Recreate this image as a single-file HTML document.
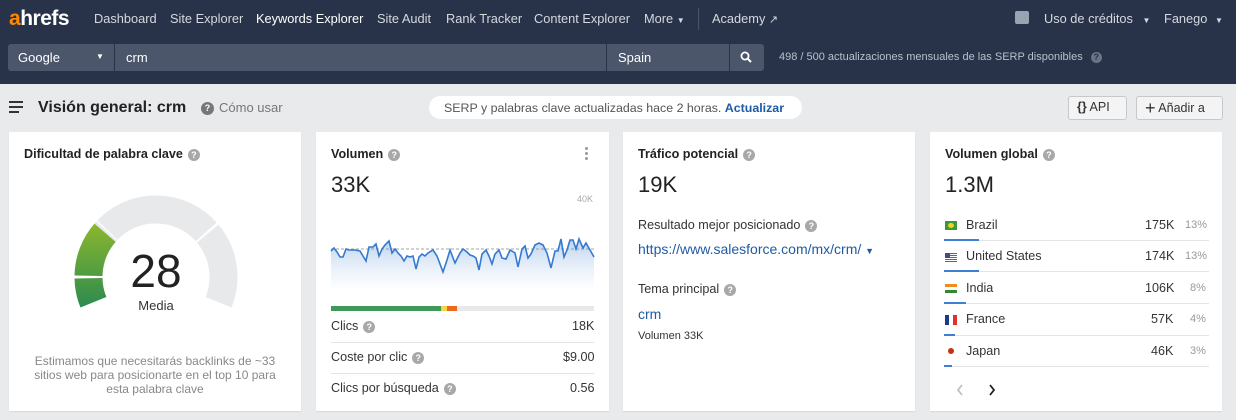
<!DOCTYPE html>
<html><head><meta charset="utf-8"><style>
*{margin:0;padding:0;box-sizing:border-box}
body{width:1236px;height:420px;background:#e9eaec;font-family:"Liberation Sans",sans-serif;position:relative;overflow:hidden;color:#222}
.a{position:absolute;white-space:nowrap}
.top{position:absolute;left:0;top:0;width:1236px;height:84px;background:#283349}
.nav{color:#d5d9e0;font-size:12.8px;top:11px}
.q{display:inline-block;width:12px;height:12px;border-radius:50%;background:#a8a8a8;color:#fff;font-size:9px;line-height:12px;text-align:center;font-weight:bold;vertical-align:middle;margin-left:5px}
.card{position:absolute;top:132px;height:279px;background:#fff;box-shadow:0 1px 1px rgba(0,0,0,.08)}
.h{font-size:12.6px;font-weight:bold;color:#222}
.big{font-size:22px;color:#222}
.row{font-size:12.6px;color:#333}
.ln{position:absolute;height:1px;background:#e3e4e6}
.bl{position:absolute;height:2px;background:#3f7fd6}
</style></head><body>
<div class="top"></div>
<div class="a" style="left:9px;top:7px;font-size:21px;font-weight:bold;color:#fff;letter-spacing:-0.5px"><span style="color:#ff8800">a</span>hrefs</div>
<div class="a nav" style="left:94px">Dashboard</div>
<div class="a nav" style="left:170px">Site Explorer</div>
<div class="a nav" style="left:256px;color:#fff">Keywords Explorer</div>
<div class="a nav" style="left:377px">Site Audit</div>
<div class="a nav" style="left:446px">Rank Tracker</div>
<div class="a nav" style="left:534px">Content Explorer</div>
<div class="a nav" style="left:644px">More <span style="font-size:8px">▼</span></div>
<div class="a" style="left:698px;top:8px;width:1px;height:22px;background:#4a5468"></div>
<div class="a nav" style="left:712px">Academy <span style="font-size:11px">↗</span></div>
<div class="a" style="left:1015px;top:11px;width:14px;height:13px;background:#9aa3b2;border-radius:2px"></div>
<div class="a nav" style="left:1044px">Uso de créditos <span style="font-size:8px;margin-left:6px">▼</span></div>
<div class="a nav" style="left:1164px">Fanego <span style="font-size:8px;margin-left:4px">▼</span></div>

<div class="a" style="left:8px;top:44px;width:106px;height:27px;background:#4b566b;border-radius:3px 0 0 3px"></div>
<div class="a" style="left:18px;top:50px;color:#fff;font-size:13px">Google</div>
<div class="a" style="left:96px;top:52px;color:#fff;font-size:8px">▼</div>
<div class="a" style="left:115px;top:44px;width:491px;height:27px;background:#4b566b"></div>
<div class="a" style="left:126px;top:50px;color:#fff;font-size:13px">crm</div>
<div class="a" style="left:607px;top:44px;width:122px;height:27px;background:#4b566b"></div>
<div class="a" style="left:618px;top:50px;color:#fff;font-size:13px">Spain</div>
<div class="a" style="left:739px;top:52px;color:#fff;font-size:8px">▼</div>
<div class="a" style="left:730px;top:44px;width:34px;height:27px;background:#4b566b;border-radius:0 3px 3px 0"></div>
<svg class="a" style="left:740px;top:51px" width="13" height="13"><circle cx="5" cy="5" r="3.6" stroke="#fff" stroke-width="1.8" fill="none"/><path d="M8 8l3 3" stroke="#fff" stroke-width="2"/></svg>
<div class="a" style="left:779px;top:51px;color:#b9c0cc;font-size:11px">498 / 500 actualizaciones mensuales de las SERP disponibles <span class="q" style="background:#6b7487;color:#283349;width:11px;height:11px;line-height:11px">?</span></div>

<div class="a" style="left:9px;top:101px;width:14px;height:2px;background:#333;box-shadow:0 5px 0 #333"></div>
<div class="a" style="left:9px;top:111px;width:10px;height:2px;background:#333"></div>
<div class="a" style="left:38px;top:99px;font-size:16px;font-weight:bold;color:#222">Visión general: crm</div>
<div class="a" style="left:199px;top:100px;font-size:13px;color:#777"><span class="q" style="background:#777;width:13px;height:13px;margin:0 5px 0 2px">?</span>Cómo usar</div>
<div class="a" style="left:429px;top:96px;width:373px;height:23px;background:#fff;border-radius:12px"></div>
<div class="a" style="left:444px;top:101px;font-size:12.4px;color:#555">SERP y palabras clave actualizadas hace 2 horas. <b style="color:#1f5aa6">Actualizar</b></div>
<div class="a" style="left:1068px;top:96px;width:59px;height:24px;border:1px solid #c7c8cb;border-radius:3px;background:#f4f4f5"></div>
<div class="a" style="left:1077px;top:100px;font-size:12.5px;color:#333"><b>{}</b> API</div>
<div class="a" style="left:1136px;top:96px;width:87px;height:24px;border:1px solid #c7c8cb;border-radius:3px;background:#f4f4f5"></div>
<div class="a" style="left:1145px;top:98px;font-size:12.5px;color:#333"><span style="font-size:18px;vertical-align:-2px">+</span> Añadir a</div>

<div class="card" style="left:9px;width:292px"></div>
<div class="card" style="left:316px;width:293px"></div>
<div class="card" style="left:623px;width:292px"></div>
<div class="card" style="left:930px;width:292px"></div>

<!-- card1 -->
<div class="a h" style="left:24px;top:147px">Dificultad de palabra clave<span class="q">?</span></div>
<svg class="a" style="left:0;top:0" width="310" height="420">
<defs><linearGradient id="g" gradientUnits="userSpaceOnUse" x1="0" y1="228" x2="0" y2="308"><stop offset="0" stop-color="#86b52f"/><stop offset="1" stop-color="#2b8a50"/></linearGradient></defs>
<g fill="none" stroke-width="28">
<path d="M93.4 302.3A67.5 67.5 0 0 1 88.5 278.2" stroke="url(#g)"/>
<path d="M88.5 275.8A67.5 67.5 0 0 1 105.1 232.7" stroke="url(#g)"/>
<path d="M105.1 232.7A67.5 67.5 0 0 1 106.6 231" stroke="#e8e9eb"/>
<path d="M107.4 230.1A67.5 67.5 0 0 1 206.2 231.8" stroke="#e8e9eb"/>
<path d="M207.7 233.6A67.5 67.5 0 0 1 218.6 302.3" stroke="#e8e9eb"/>
</g></svg>
<div class="a" style="left:156px;top:244px;transform:translateX(-50%);font-size:46px;color:#222">28</div>
<div class="a" style="left:156px;top:298px;transform:translateX(-50%);font-size:13px;color:#333">Media</div>
<div class="a" style="left:155px;top:354px;transform:translateX(-50%);font-size:12px;color:#888;text-align:center;line-height:14px">Estimamos que necesitarás backlinks de ~33<br>sitios web para posicionarte en el top 10 para<br>esta palabra clave</div>

<!-- card2 -->
<div class="a h" style="left:331px;top:147px">Volumen<span class="q">?</span></div>
<div class="a" style="left:585px;top:147px;width:3px;height:3px;background:#999;border-radius:50%;box-shadow:0 5px 0 #999,0 10px 0 #999"></div>
<div class="a big" style="left:331px;top:172px">33K</div>
<div class="a" style="left:577px;top:194px;font-size:9px;color:#aaa">40K</div>
<svg class="a" style="left:0;top:0" width="620" height="420">
<defs><linearGradient id="f" x1="0" y1="0" x2="0" y2="1"><stop offset="0" stop-color="#bcd3ef"/><stop offset="1" stop-color="#fff" stop-opacity=".6"/></linearGradient></defs>
<path d="M331 251L334 248L337 252L340 257L343 257L346 249L349 250L355 250L360 251L366 261L369 247L373 247L376 244L379 256L382 249L385 245L389 241L392 253L395 249L398 253L401 256L404 261L407 256L410 257L413 256L416 269L419 257L422 254L425 256L428 253L433 250L437 256L443 272L447 260L450 250L455 263L460 253L463 249L467 252L470 255L473 256L476 258L479 270L482 254L486 250L489 256L492 264L495 254L499 250L502 258L506 259L510 250L515 253L518 267L522 249L525 246L528 258L531 254L535 245L539 243L543 245L547 253L551 268L555 251L558 251L561 239L564 257L567 250L570 240L573 240L576 249L579 239L583 248L586 243L594 257L594 291L331 291Z" fill="url(#f)"/>
<line x1="331" y1="249" x2="594" y2="249" stroke="#888" stroke-dasharray="3 2" stroke-width="0.8"/>
<path d="M331 251L334 248L337 252L340 257L343 257L346 249L349 250L355 250L360 251L366 261L369 247L373 247L376 244L379 256L382 249L385 245L389 241L392 253L395 249L398 253L401 256L404 261L407 256L410 257L413 256L416 269L419 257L422 254L425 256L428 253L433 250L437 256L443 272L447 260L450 250L455 263L460 253L463 249L467 252L470 255L473 256L476 258L479 270L482 254L486 250L489 256L492 264L495 254L499 250L502 258L506 259L510 250L515 253L518 267L522 249L525 246L528 258L531 254L535 245L539 243L543 245L547 253L551 268L555 251L558 251L561 239L564 257L567 250L570 240L573 240L576 249L579 239L583 248L586 243L594 257" fill="none" stroke="#3579d0" stroke-width="1.6"/>
<rect x="331" y="306" width="263" height="5" fill="#e8e9eb"/>
<rect x="331" y="306" width="110" height="5" fill="#3f9a5a"/>
<rect x="441" y="306" width="6" height="5" fill="#f5d34a"/>
<rect x="447" y="306" width="10" height="5" fill="#ec6a1f"/>
</svg>
<div class="a row" style="left:331px;top:319px">Clics<span class="q">?</span></div>
<div class="a row" style="left:572px;top:319px">18K</div>
<div class="ln" style="left:331px;top:342px;width:263px"></div>
<div class="a row" style="left:331px;top:350px">Coste por clic<span class="q">?</span></div>
<div class="a row" style="left:563px;top:350px">$9.00</div>
<div class="ln" style="left:331px;top:373px;width:263px"></div>
<div class="a row" style="left:331px;top:381px">Clics por búsqueda<span class="q">?</span></div>
<div class="a row" style="left:570px;top:381px">0.56</div>

<!-- card3 -->
<div class="a h" style="left:638px;top:147px">Tráfico potencial<span class="q">?</span></div>
<div class="a big" style="left:638px;top:172px">19K</div>
<div class="a row" style="left:638px;top:218px">Resultado mejor posicionado<span class="q">?</span></div>
<div class="a" style="left:638px;top:241px;font-size:14px;color:#1f5aa6">https://www.salesforce.com/mx/crm/ <span style="font-size:9px">▼</span></div>
<div class="a row" style="left:638px;top:282px">Tema principal<span class="q">?</span></div>
<div class="a" style="left:638px;top:306px;font-size:14px;color:#1f5aa6">crm</div>
<div class="a" style="left:638px;top:330px;font-size:11px;color:#333">Volumen 33K</div>

<!-- card4 -->
<div class="a h" style="left:945px;top:147px">Volumen global<span class="q">?</span></div>
<div class="a big" style="left:945px;top:172px">1.3M</div>
<div class="a" style="left:945px;top:221px;width:12px;height:9px;background:#3a9a3a"><div style="margin:2px 3px;width:6px;height:5px;background:#f2d21f;border-radius:50%"></div></div>
<div class="a" style="left:945px;top:253px;width:12px;height:9px;background:repeating-linear-gradient(#d34 0 1px,#fff 1px 2px)"><div style="width:5px;height:5px;background:#3c4f8a"></div></div>
<div class="a" style="left:945px;top:284px;width:12px;height:9px;background:linear-gradient(#f28b20 0 3px,#fff 3px 6px,#2d8a2d 6px)"></div>
<div class="a" style="left:945px;top:315px;width:12px;height:10px;background:linear-gradient(90deg,#1c3a8a 0 4px,#fff 4px 8px,#e03030 8px)"></div>
<div class="a" style="left:948px;top:348px;width:6px;height:6px;background:#c83010;border-radius:50%"></div>
<div class="a row" style="left:966px;top:218px">Brazil</div><div class="a row" style="left:1145px;top:218px">175K</div><div class="a" style="left:1185px;top:219px;font-size:11px;color:#999">13%</div>
<div class="ln" style="left:944px;top:240px;width:265px"></div><div class="bl" style="left:944px;top:239px;width:35px"></div>
<div class="a row" style="left:966px;top:249px">United States</div><div class="a row" style="left:1145px;top:249px">174K</div><div class="a" style="left:1185px;top:250px;font-size:11px;color:#999">13%</div>
<div class="ln" style="left:944px;top:271px;width:265px"></div><div class="bl" style="left:944px;top:270px;width:35px"></div>
<div class="a row" style="left:966px;top:281px">India</div><div class="a row" style="left:1145px;top:281px">106K</div><div class="a" style="left:1190px;top:282px;font-size:11px;color:#999">8%</div>
<div class="ln" style="left:944px;top:303px;width:265px"></div><div class="bl" style="left:944px;top:302px;width:22px"></div>
<div class="a row" style="left:966px;top:312px">France</div><div class="a row" style="left:1151px;top:312px">57K</div><div class="a" style="left:1190px;top:313px;font-size:11px;color:#999">4%</div>
<div class="ln" style="left:944px;top:335px;width:265px"></div><div class="bl" style="left:944px;top:334px;width:11px"></div>
<div class="a row" style="left:966px;top:344px">Japan</div><div class="a row" style="left:1151px;top:344px">46K</div><div class="a" style="left:1190px;top:345px;font-size:11px;color:#999">3%</div>
<div class="ln" style="left:944px;top:366px;width:265px"></div><div class="bl" style="left:944px;top:365px;width:8px"></div>
<svg class="a" style="left:954px;top:382px" width="50" height="16"><path d="M8 3L4 8L8 13" stroke="#bbb" stroke-width="1.6" fill="none"/><path d="M36 3L40 8L36 13" stroke="#222" stroke-width="1.8" fill="none"/></svg>
</body></html>
